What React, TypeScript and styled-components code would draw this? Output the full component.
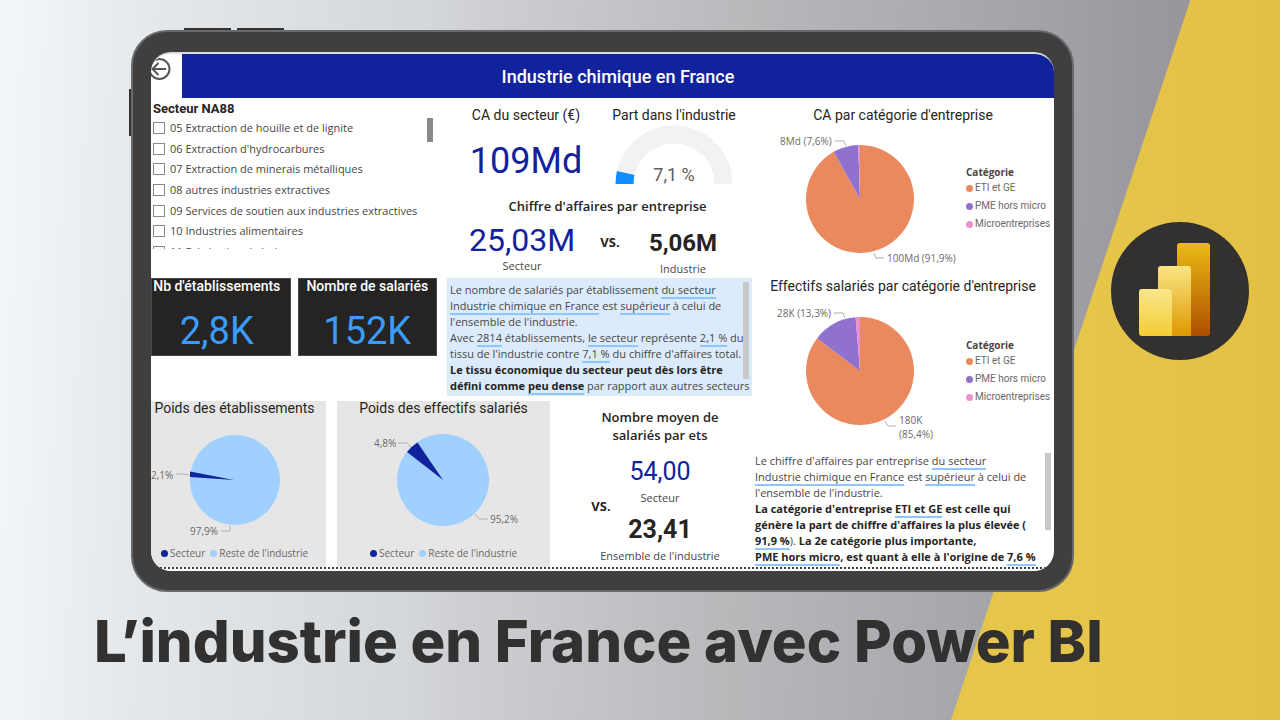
import React from "react";
import styled, { createGlobalStyle } from "styled-components";

const din = `Roboto, "Liberation Sans", sans-serif`;
const segoe = `"Open Sans", "Noto Sans", sans-serif`;

const colors = {
  blue: "#11239c",
  sky: "#9fd0ff",
  ink: "#252423",
  text: "#484644",
  muted: "#6b6967",
  orange: "#ea895e",
  purple: "#9071ce",
  pink: "#ee8fcd",
};

const GlobalStyle = createGlobalStyle`
  *, *::before, *::after { box-sizing: border-box; }
  body { margin: 0; font-family: ${segoe}; color: ${colors.ink}; }
  h1, h2, h3, p, ul { margin: 0; padding: 0; }
  ul { list-style: none; }
`;

const Page = styled.div`
  display: grid;
  grid-template-columns: minmax(0, 1fr);
  min-height: 100vh;
`;

const Backdrop = styled.div`
  grid-area: 1 / 1;
  display: grid;
  background: linear-gradient(
    92deg,
    #f2f7fa 0%, #e4e8ea 12%, #d3d7d9 33%, #cfcfd3 37%, #cbcbcf 41%,
    #b8b8bb 58%, #a7a8ac 75%, #97949a 92%
  );
`;

const YellowBand = styled.div`
  background: linear-gradient(90deg, #e8c84d, #e6c54b 85%, #e2c045);
  clip-path: polygon(93% 0, 100% 0, 100% 100%, 74.3% 100%);
`;

const Content = styled.div`
  grid-area: 1 / 1;
  z-index: 1;
  display: flex;
  flex-direction: column;
  padding: 30px 31px 0 131px;
`;

const Showcase = styled.div`
  display: flex;
  align-items: center;
  gap: 37px;
`;

const Device = styled.div`
  position: relative;
  flex: 1;
  min-width: 0;
  padding: 20px 18px 19px;
  border: 2px solid #68696b;
  border-radius: 36px;
  background: #403f3d;
`;

const SideKey = styled.span<{ $top: number; $left: number; $vertical?: boolean }>`
  position: absolute;
  top: ${(p) => p.$top}px;
  left: ${(p) => p.$left}px;
  width: ${(p) => (p.$vertical ? 2 : 47)}px;
  height: ${(p) => (p.$vertical ? 47 : 2)}px;
  background: #343332;
`;

const Screen = styled.main`
  overflow: hidden;
  padding-bottom: 2px;
  border-top: 2px solid #dcdde0;
  border-radius: 20px;
  background: #fff;
`;

const Header = styled.header`
  display: flex;
  height: 44px;
`;

const BackButton = styled.button`
  flex: none;
  width: 31px;
  padding: 0;
  border: 0;
  background: none;
  cursor: pointer;
  svg { display: block; margin: 2px 0 18px; }
`;

const Banner = styled.h1`
  flex: 1;
  background: ${colors.blue};
  color: #fff;
  font: 500 18px/46px ${din};
  text-align: center;
`;

const Board = styled.div`
  display: grid;
  grid-template-columns: minmax(0, 601fr) minmax(0, 302fr);
  border-bottom: 2px dotted #3c3c3c;
`;

const LeftArea = styled.div`
  display: flex;
  flex-direction: column;
  gap: 5px;
`;

const TopRow = styled.div`
  display: grid;
  grid-template-columns: minmax(0, 286fr) minmax(0, 305fr);
  gap: 10px;
  height: 298px;
`;

const BottomRow = styled.div`
  display: grid;
  grid-template-columns: minmax(0, 175fr) minmax(0, 213fr) minmax(0, 191fr);
  gap: 11px;
`;

const Stack = styled.div<{ $top?: number }>`
  display: flex;
  flex-direction: column;
  padding-top: ${(p) => p.$top ?? 0}px;
`;

const Slicer = styled.fieldset`
  margin: 0;
  padding: 2px 4px 0 2px;
  border: 0;
`;

const SlicerTitle = styled.legend`
  float: left;
  width: 100%;
  padding: 0;
  font: 700 13px/18px ${din};
`;

const SlicerBody = styled.div`
  clear: both;
  display: flex;
  justify-content: space-between;
  height: 131px;
  overflow: hidden;
`;

const Options = styled.ul`
  display: grid;
  grid-auto-rows: 1fr;
  height: 144px;
`;

const Option = styled.label`
  display: flex;
  align-items: center;
  gap: 5px;
  height: 100%;
  color: ${colors.text};
  font-size: 11px;
  line-height: 14px;
  white-space: nowrap;
`;

const Check = styled.input`
  appearance: none;
  width: 12px;
  height: 12px;
  margin: 0;
  border: 1px solid #8a8886;
  background: #fff;
`;

const ScrollThumb = styled.span<{ $height: number; $dark?: boolean }>`
  flex: none;
  width: 6px;
  height: ${(p) => p.$height}px;
  background: ${(p) => (p.$dark ? "#8a8886" : "#c8c8c8")};
`;

const Cards = styled.div`
  display: grid;
  grid-template-columns: 1fr 1fr;
  gap: 7px;
  margin-top: 29px;
`;

const Card = styled.section<{ $bleed?: boolean }>`
  height: 78px;
  padding-right: ${(p) => (p.$bleed ? 8 : 0)}px;
  border: 1px solid #4a4948;
  background: ${colors.ink};
  text-align: center;
`;

const CardTitle = styled.h2`
  color: #fff;
  font: 500 14px/14px ${din};
  white-space: nowrap;
`;

const CardValue = styled.p`
  margin-top: 17px;
  color: #3b9cff;
  font: 400 38px/42px ${din};
`;

const VisualTitle = styled.h2`
  color: ${colors.ink};
  font: 400 14px/18px ${din};
  text-align: center;
  white-space: nowrap;
`;

const BoldTitle = styled.h2`
  font: 600 13px/18px ${segoe};
  text-align: center;
`;

const Figure = styled.p<{ $size: number; $bold?: boolean }>`
  color: ${(p) => (p.$bold ? colors.ink : colors.blue)};
  font: ${(p) => (p.$bold ? 700 : 400)} ${(p) => p.$size}px/38px ${din};
  text-align: center;
`;

const Caption = styled.p`
  color: ${colors.text};
  font-size: 11px;
  line-height: 14px;
  text-align: center;
  white-space: nowrap;
`;

const Versus = styled.p<{ $top: number }>`
  padding-top: ${(p) => p.$top}px;
  font: 700 13px/18px ${segoe};
  text-align: center;
`;

const KpiRow = styled.div`
  display: grid;
  grid-template-columns: minmax(0, 158fr) minmax(0, 138fr);
  padding-right: 9px;
  svg { display: block; margin: 0 auto; }
`;

const KpiValue = styled.div`
  padding-top: 18px;
`;

const CompareTitle = styled.div`
  padding: 11px 0 0 16px;
`;

const CompareRow = styled.div`
  display: grid;
  grid-template-columns: minmax(0, 150fr) 26px minmax(0, 120fr);
  padding: 6px 9px 0 0;
`;

const Narrative = styled.section<{ $tinted?: boolean }>`
  display: flex;
  justify-content: space-between;
  margin-top: ${(p) => (p.$tinted ? "auto" : 0)};
  padding: ${(p) => (p.$tinted ? "4px 3px 2px" : "3px 3px 0")};
  background: ${(p) => (p.$tinted ? "#dbebfb" : "none")};
  color: ${colors.text};
  font-size: 11px;
  line-height: 16px;
  white-space: nowrap;
  p { width: 0; flex: 1; }
  strong { color: ${colors.ink}; }
`;

const Value = styled.span`
  border-bottom: 2px solid #8ec7fd;
`;

const PieRow = styled.div`
  display: flex;
  padding-left: 3px;
`;

const PieBox = styled.div`
  flex: 1;
  svg { display: block; width: 100%; height: auto; }
`;

const SideLegend = styled.div<{ $top: number }>`
  flex: none;
  width: 88px;
  padding-top: ${(p) => p.$top}px;
  color: ${colors.muted};
  font: 400 10px/18px ${din};
  white-space: nowrap;
  h3 { color: ${colors.text}; font: 700 10px/14px ${segoe}; }
`;

const LegendItem = styled.li<{ $color: string }>`
  display: flex;
  align-items: center;
  gap: 2px;
  &::before {
    content: "";
    flex: none;
    width: 7px;
    height: 7px;
    border-radius: 50%;
    background: ${(p) => p.$color};
  }
`;

const GreyPanel = styled.section`
  height: 166px;
  background: #e6e6e6;
  overflow: hidden;
  svg { display: block; width: 100%; height: auto; }
`;

const PanelTitle = styled(VisualTitle)<{ $bleed?: boolean }>`
  padding: 0 ${(p) => (p.$bleed ? 8 : 0)}px 4px 0;
  line-height: 14px;
`;

const BottomLegend = styled.ul`
  display: flex;
  gap: 5px;
  padding-left: 10px;
  color: ${colors.muted};
  font-size: 10px;
  line-height: 14px;
  white-space: nowrap;
`;

const CenteredLegend = styled(BottomLegend)`
  padding-left: 33px;
`;

const Average = styled.section`
  display: grid;
  grid-template-columns: 40px minmax(0, 1fr);
  padding: 7px 23px 0 20px;
`;

const AverageBody = styled.div`
  margin-left: -30px;
`;

const Gap = styled.div<{ $size: number }>`
  height: ${(p) => p.$size}px;
`;

const Logo = styled.svg`
  flex: none;
  width: 138px;
  height: 138px;
  margin-bottom: 40px;
`;

const Headline = styled.h1`
  margin: 11px 0 0 -37px;
  color: #33312f;
  font: 800 58px/76px Inter, "Liberation Sans", sans-serif;
  white-space: nowrap;
`;

const sectors = [
  "05 Extraction de houille et de lignite",
  "06 Extraction d'hydrocarbures",
  "07 Extraction de minerais métalliques",
  "08 autres industries extractives",
  "09 Services de soutien aux industries extractives",
  "10 Industries alimentaires",
  "11 Fabrication de boissons",
];

/** Path of a pie slice; fractions run clockwise from twelve o'clock. */
function slice(cx: number, cy: number, r: number, from: number, to: number) {
  const at = (f: number) =>
    `${cx + r * Math.sin(2 * Math.PI * f)} ${cy - r * Math.cos(2 * Math.PI * f)}`;
  return `M${cx} ${cy}L${at(from)}A${r} ${r} 0 ${to - from > 0.5 ? 1 : 0} 1 ${at(to)}Z`;
}

type Label = { x: number; y: number; text: string; line?: string };

function Labels({ items }: { items: Label[] }) {
  return (
    <g fontFamily={`"Open Sans", sans-serif`} fontSize="10" fill={colors.muted}>
      {items.map((l) => (
        <g key={l.text}>
          {l.line && <path d={l.line} fill="none" stroke="#b3b0ad" />}
          <text x={l.x} y={l.y}>{l.text}</text>
        </g>
      ))}
    </g>
  );
}

function CategoryPie(props: {
  title: string; height: number; cy: number; legendTop: number; shares: [number, number]; labels: Label[];
}) {
  const [a, b] = props.shares;
  return (
    <>
      <VisualTitle>{props.title}</VisualTitle>
      <PieRow>
        <PieBox>
          <svg viewBox={`0 0 211 ${props.height}`} role="img" aria-label={props.title}>
            <path d={slice(105, props.cy, 54, 0, a)} fill={colors.orange} />
            <path d={slice(105, props.cy, 54, a, b)} fill={colors.purple} />
            <path d={slice(105, props.cy, 54, b, 1)} fill={colors.pink} />
            <Labels items={props.labels} />
          </svg>
        </PieBox>
        <SideLegend $top={props.legendTop}>
          <h3>Catégorie</h3>
          <ul>
            <LegendItem $color={colors.orange}>ETI et GE</LegendItem>
            <LegendItem $color={colors.purple}>PME hors micro</LegendItem>
            <LegendItem $color={colors.pink}>Microentreprises</LegendItem>
          </ul>
        </SideLegend>
      </PieRow>
    </>
  );
}

function ShareLegend({ as: List }: { as: typeof BottomLegend }) {
  return (
    <List>
      <LegendItem $color={colors.blue}>Secteur</LegendItem>
      <LegendItem $color={colors.sky}>Reste de l'industrie</LegendItem>
    </List>
  );
}

function Gauge() {
  return (
    <svg width="120" height="62" viewBox="0 0 120 62" role="img" aria-label="7,1 %">
      <path d="M10.500 60A49.500 49.500 0 0 1 109.500 60" fill="none" stroke="#f3f2f1" strokeWidth="18" />
      <path d="M10.500 60A49.500 49.500 0 0 1 11.730 49.040" fill="none" stroke="#118dff" strokeWidth="18" />
      <text x="60" y="57" textAnchor="middle" fontFamily="Roboto, sans-serif" fontSize="18" fill="#605e5c">7,1 %</text>
    </svg>
  );
}

export default function App() {
  return (
    <Page>
      <GlobalStyle />
      <Backdrop><YellowBand /></Backdrop>
      <Content>
        <Showcase>
          <Device>
            <SideKey $top={-4} $left={51} />
            <SideKey $top={-4} $left={104} />
            <SideKey $top={57} $left={-4} $vertical />
            <Screen>
              <Header>
                <BackButton aria-label="Retour">
                  <svg width="22" height="24" viewBox="0 0 22 24" fill="none" stroke="#555" strokeWidth="2">
                    <circle cx="8.500" cy="13" r="10" />
                    <path d="M15 13H2M7.500 7L1.500 13L7.500 19" />
                  </svg>
                </BackButton>
                <Banner>Industrie chimique en France</Banner>
              </Header>
              <Board>
                <LeftArea>
                  <TopRow>
                    <Stack>
                      <Slicer>
                        <SlicerTitle>Secteur NA88</SlicerTitle>
                        <SlicerBody>
                          <Options>
                            {sectors.map((s) => (
                              <li key={s}><Option><Check type="checkbox" />{s}</Option></li>
                            ))}
                          </Options>
                          <ScrollThumb $height={24} $dark />
                        </SlicerBody>
                      </Slicer>
                      <Cards>
                        <Card $bleed><CardTitle>Nb d'établissements</CardTitle><CardValue>2,8K</CardValue></Card>
                        <Card><CardTitle>Nombre de salariés</CardTitle><CardValue>152K</CardValue></Card>
                      </Cards>
                    </Stack>
                    <Stack $top={8}>
                      <KpiRow>
                        <div>
                          <VisualTitle>CA du secteur (€)</VisualTitle>
                          <KpiValue><Figure $size={36}>109Md</Figure></KpiValue>
                        </div>
                        <div>
                          <VisualTitle>Part dans l'industrie</VisualTitle>
                          <Gauge />
                        </div>
                      </KpiRow>
                      <CompareTitle><BoldTitle>Chiffre d'affaires par entreprise</BoldTitle></CompareTitle>
                      <CompareRow>
                        <div><Figure $size={32}>25,03M</Figure><Caption>Secteur</Caption></div>
                        <Versus $top={12}>VS.</Versus>
                        <Stack $top={3}><Figure $size={24} $bold>5,06M</Figure><Caption>Industrie</Caption></Stack>
                      </CompareRow>
                      <Narrative $tinted>
                        <p>
                          Le nombre de salariés par établissement <Value>du secteur</Value><br />
                          <Value>Industrie chimique en France</Value> est <Value>supérieur</Value> à celui de<br />
                          l'ensemble de l'industrie.<br />
                          Avec <Value>2814</Value> établissements, <Value>le secteur</Value> représente <Value>2,1 %</Value> du<br />
                          tissu de l'industrie contre <Value>7,1 %</Value> du chiffre d'affaires total.<br />
                          <strong>Le tissu économique du secteur peut dès lors être</strong><br />
                          <strong>défini comme <Value>peu dense</Value></strong> par rapport aux autres secteurs
                        </p>
                        <ScrollThumb $height={97} />
                      </Narrative>
                    </Stack>
                  </TopRow>
                  <BottomRow>
                    <GreyPanel>
                      <PanelTitle $bleed>Poids des établissements</PanelTitle>
                      <svg viewBox="0 0 175 127" role="img" aria-label="Poids des établissements">
                        <circle cx="84" cy="61" r="45" fill={colors.sky} />
                        <path d="M83 61L39 52.500V58Z" fill={colors.blue} />
                        <Labels items={[
                          { x: 0, y: 60, text: "2,1%", line: "M25 55H33L38 56" },
                          { x: 39, y: 116, text: "97,9%", line: "M70 112H79V107" },
                        ]} />
                      </svg>
                      <ShareLegend as={BottomLegend} />
                    </GreyPanel>
                    <GreyPanel>
                      <PanelTitle>Poids des effectifs salariés</PanelTitle>
                      <svg viewBox="0 0 213 127" role="img" aria-label="Poids des effectifs salariés">
                        <circle cx="106" cy="61" r="46" fill={colors.sky} />
                        <path d="M106 61L80.500 23.500Q74.500 27.500 70 33Z" fill={colors.blue} />
                        <Labels items={[
                          { x: 37, y: 28, text: "4,8%", line: "M61 24H70L74 28" },
                          { x: 153, y: 104, text: "95,2%", line: "M138 95L142 100H151" },
                        ]} />
                      </svg>
                      <ShareLegend as={CenteredLegend} />
                    </GreyPanel>
                    <Average>
                      <Versus $top={89}>VS.</Versus>
                      <AverageBody>
                        <BoldTitle>Nombre moyen de<br />salariés par ets</BoldTitle>
                        <Gap $size={9} />
                        <Figure $size={25}>54,00</Figure>
                        <Caption>Secteur</Caption>
                        <Gap $size={6} />
                        <Figure $size={25} $bold>23,41</Figure>
                        <Caption>Ensemble de l'industrie</Caption>
                      </AverageBody>
                    </Average>
                  </BottomRow>
                </LeftArea>
                <Stack $top={8}>
                  <CategoryPie
                    title="CA par catégorie d'entreprise"
                    height={153}
                    cy={75}
                    legendTop={41}
                    shares={[0.919, 0.995]}
                    labels={[
                      { x: 25, y: 21, text: "8Md (7,6%)", line: "M80 17H89L91 22" },
                      { x: 132, y: 138, text: "100Md (91,9%)", line: "M119 129L121 134H129" },
                    ]}
                  />
                  <CategoryPie
                    title="Effectifs salariés par catégorie d'entreprise"
                    height={155}
                    cy={76}
                    legendTop={43}
                    shares={[0.854, 0.987]}
                    labels={[
                      { x: 22, y: 22, text: "28K (13,3%)", line: "M79 18H88L90 23" },
                      { x: 144, y: 129, text: "180K", line: "M130 126L133 131H141" },
                      { x: 144, y: 143, text: "(85,4%)" },
                    ]}
                  />
                  <Narrative>
                    <p>
                      Le chiffre d'affaires par entreprise <Value>du secteur</Value><br />
                      <Value>Industrie chimique en France</Value> est <Value>supérieur</Value> à celui de<br />
                      l'ensemble de l'industrie.<br />
                      <strong>La catégorie d'entreprise <Value>ETI et GE</Value> est celle qui</strong><br />
                      <strong>génère la part de chiffre d'affaires la plus élevée (</strong><br />
                      <strong><Value>91,9 %</Value></strong>). <strong>La 2e catégorie plus importante,</strong><br />
                      <strong><Value>PME hors micro</Value>, est quant à elle à l'origine de <Value>7,6 %</Value></strong>
                    </p>
                    <ScrollThumb $height={77} />
                  </Narrative>
                </Stack>
              </Board>
            </Screen>
          </Device>
          <Logo viewBox="0 0 138 138" role="img" aria-label="Power BI">
            <defs>
              <linearGradient id="tall" x1="0" y1="0" x2="0" y2="1">
                <stop offset="0" stopColor="#ebbb14" /><stop offset="1" stopColor="#ad4e00" />
              </linearGradient>
              <linearGradient id="middle" x1="0" y1="0" x2="0" y2="1">
                <stop offset="0" stopColor="#f9e583" /><stop offset="1" stopColor="#de9800" />
              </linearGradient>
              <linearGradient id="short" x1="0" y1="0" x2="0" y2="1">
                <stop offset="0" stopColor="#f9e68b" /><stop offset="1" stopColor="#f3cd32" />
              </linearGradient>
            </defs>
            <circle cx="69" cy="69" r="69" fill="#33312f" />
            <rect x="66" y="21" width="33" height="93" rx="3" fill="url(#tall)" />
            <path d="M47 47a3 3 0 0 1 3-3h27a3 3 0 0 1 3 3v67H47Z" fill="url(#middle)" />
            <path d="M28 70a3 3 0 0 1 3-3h27a3 3 0 0 1 3 3v44H31a3 3 0 0 1-3-3Z" fill="url(#short)" />
          </Logo>
        </Showcase>
        <Headline>L’industrie en France avec Power BI</Headline>
      </Content>
    </Page>
  );
}
